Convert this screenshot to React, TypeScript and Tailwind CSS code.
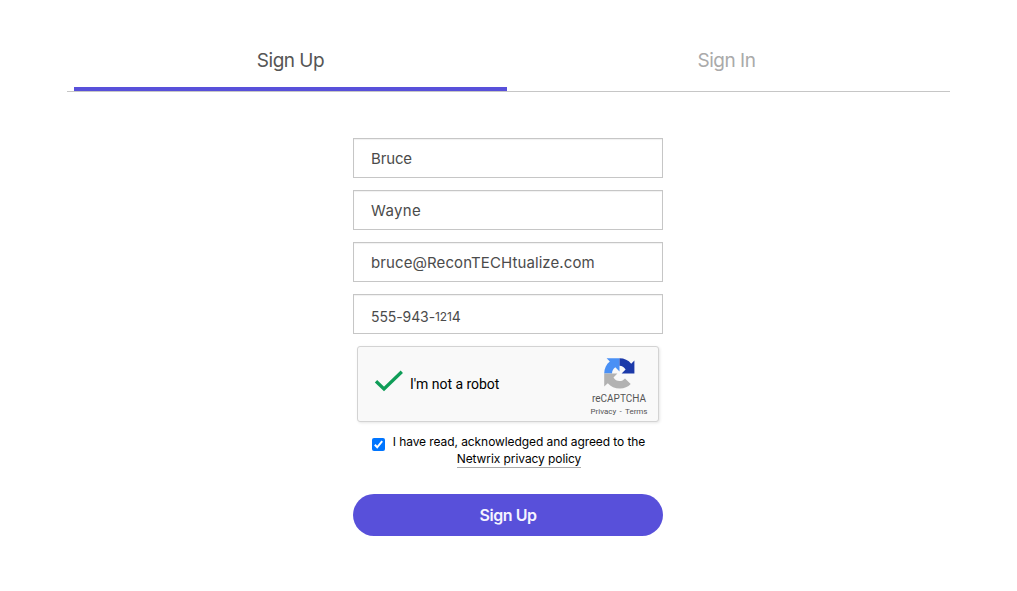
import React from "react";

const fieldClass =
  "flex h-10 w-[310px] items-center border border-[#c6c6c6] pl-[17px] pt-[2px] text-[15px] text-[#4b4b4b] whitespace-nowrap shadow-[inset_0_1px_1px_rgba(0,0,0,0.06)]";

function RecaptchaLogo() {
  return (
    <svg viewBox="0 0 31 31" className="h-[31px] w-[31px]">
      <path fill="#4a90f5" d="M15.5 0.3H2.6L5.8 3.4C2.3 6.2 0.2 10.5 0.2 15.5H8C8 13 9.2 10.9 11.3 9.3L15.5 13.4Z" />
      <path fill="#1c3aa9" d="M15.5 0.3C20.3 0.3 24.4 2.2 27.2 5.7L30.4 2.5V15.5H17.6L21.6 11.4C20.2 9.2 18.1 8 15.5 7.8Z" />
      <path fill="#b2b2b2" d="M0.2 15.5H13.4L9.5 19.5C10.8 21.8 13 23.1 15.6 23.1C17.8 23.1 19.6 22.2 21 20.5L26.7 26.1C24.1 29 20.3 30.6 16 30.6C10.9 30.6 6.8 28.8 3.8 25.3L0.2 28.5Z" />
    </svg>
  );
}

function Recaptcha() {
  return (
    <div className="mt-3 ml-1 flex h-[76px] w-[302px] rounded-[3px] border border-[#d3d3d3] bg-[#f9f9f9] font-[Roboto,sans-serif] shadow-[1px_1px_3px_0_rgba(0,0,0,0.1)]">
      <svg viewBox="0 0 30 22" className="mt-[23px] ml-4 h-[22px] w-[30px]">
        <path d="M2 11.3 L10 19 L27.8 1.8" fill="none" stroke="#0f9d58" strokeWidth="3.3" />
      </svg>
      <div className="mt-[27px] ml-[6px] w-[160px] text-sm leading-5 tracking-[-0.03px] text-black whitespace-nowrap">I'm not a robot</div>
      <div className="ml-[18px] flex w-[62px] flex-col items-center whitespace-nowrap text-[#555]">
        <div className="mt-[11px]"><RecaptchaLogo /></div>
        <div className="mt-1 text-[10px] leading-[12px]">reCAPTCHA</div>
        <div className="mt-[2px] flex w-[57px] justify-between text-[8px] leading-[10px]">
          <span>Privacy</span>
          <span>-</span>
          <span>Terms</span>
        </div>
      </div>
    </div>
  );
}

export default function App() {
  return (
    <div className="flex h-[591px] w-full flex-col bg-white font-[Inter,sans-serif]">
      <div className="mt-[30px] ml-[67px] flex h-[62px] w-[883px] border-b border-[#c6c6c6] pl-[7px] text-[19px]">
        <div className="flex h-[61px] w-[433px] justify-center border-b-4 border-[#5850da] pt-[17px] leading-7 text-[#555]">
          <span className="tracking-[-0.5px]">Sign Up</span>
        </div>
        <div className="flex w-[439px] justify-center pt-[17px] leading-7 text-[#aaa]">
          <span className="tracking-[-0.5px]">Sign In</span>
        </div>
      </div>
      <div className="mt-[46px] ml-[353px] w-[310px]">
        <div className="flex flex-col gap-3">
          <div className={fieldClass}><span className="tracking-[-0.15px]">Bruce</span></div>
          <div className={fieldClass}><span className="tracking-[0.4px]">Wayne</span></div>
          <div className={fieldClass}><span className="tracking-[0.09px]">bruce@ReconTECHtualize.com</span></div>
          <div className={fieldClass}>
            <span className="mt-[3px] text-[14px] tracking-[-0.1px]">
              555-943-<span className="align-[1.5px] text-[12px]">121</span>4
            </span>
          </div>
        </div>
        <Recaptcha />
        <div className="mt-[11px] flex h-[36px] pl-[19px]">
          <svg viewBox="0 0 13 13" className="mt-[5px] h-[13px] w-[13px]">
            <rect width="13" height="13" rx="2" fill="#0075ff" />
            <path d="M2.8 6.8 L5.2 9.3 L10.2 3.2" fill="none" stroke="#fff" strokeWidth="2" />
          </svg>
          <div className="ml-[7px] flex w-[254px] flex-col items-center text-xs leading-[17px] tracking-[-0.08px] text-black whitespace-nowrap">
            <div>I have read, acknowledged and agreed to the</div>
            <div className="h-[18px] border-b border-[#aaa]">Netwrix privacy policy</div>
          </div>
        </div>
        <button className="mt-[25px] flex h-[42px] w-[310px] items-center justify-center rounded-full bg-[#5850da] text-base font-semibold text-[#f5f4ff]">
          <span className="tracking-[-0.45px]">Sign Up</span>
        </button>
      </div>
    </div>
  );
}
